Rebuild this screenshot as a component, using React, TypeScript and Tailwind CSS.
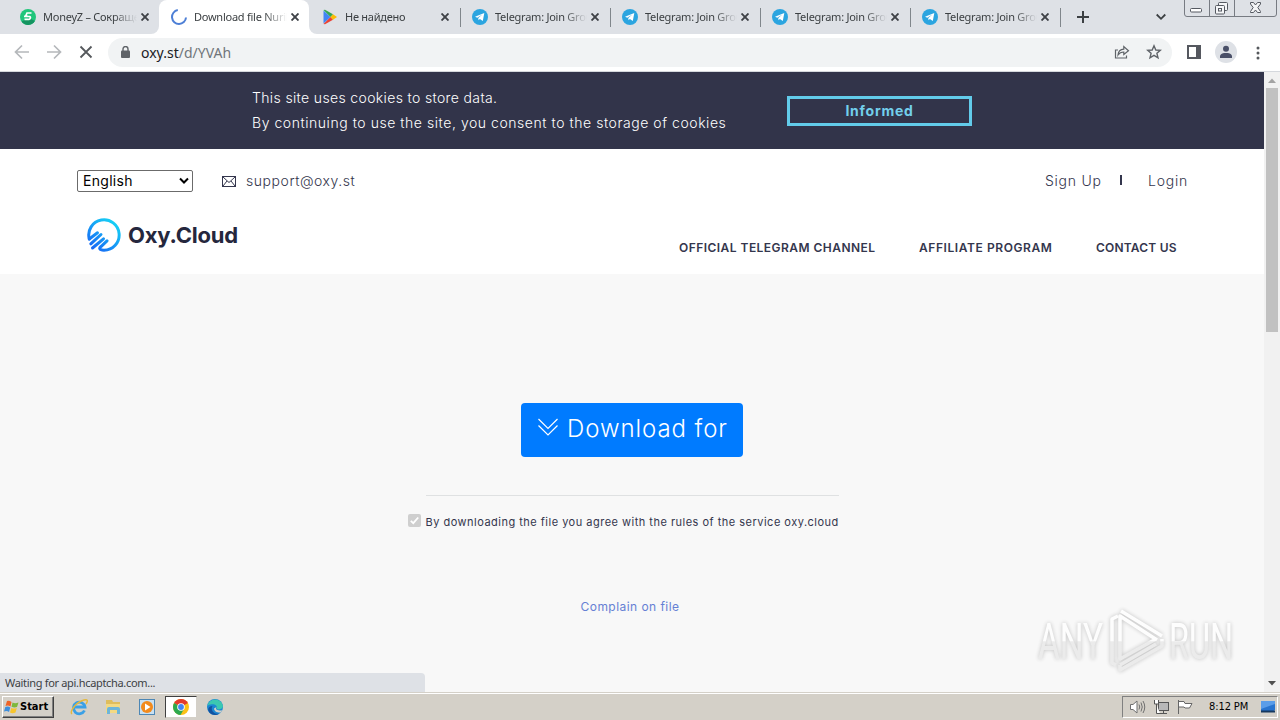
import React from 'react';
import clsx from 'clsx';

interface TabProps {
  title: string;
  icon: React.ReactNode;
  active?: boolean;
  separator?: boolean;
}

const CloseIcon = () => (
  <svg className="w-2 h-2 shrink-0" viewBox="0 0 8 8" fill="none" stroke="#3f4247" strokeWidth="1.9">
    <path d="M0.5 0.5 7.5 7.5M7.5 0.5 0.5 7.5" />
  </svg>
);

const TelegramIcon = () => (
  <svg className="w-4 h-4" viewBox="0 0 16 16">
    <circle cx="8" cy="8" r="8" fill="#2ca5e0" />
    <path d="M3 7.8 12.3 4.1 10.8 12 7.9 9.9 6.5 11.2 6.3 8.9 10.3 5.6 5.3 8.7Z" fill="#fff" />
  </svg>
);

const MoneyIcon = () => (
  <svg className="w-4 h-4" viewBox="0 0 16 16">
    <circle cx="8" cy="8" r="8" fill="#20c67b" />
    <path d="M1.5 12.5A8 8 0 0 0 15 12L9 9Z" fill="#159461" />
    <path d="M11.5 4H7L5.5 7.5H9.5C11 7.8 10.5 10 9 10.3H4.5M4 7.4H8" fill="none" stroke="#fff" strokeWidth="1.7" />
  </svg>
);

const PlayIcon = () => (
  <svg className="w-4 h-4" viewBox="0 0 16 16">
    <path d="M1.500 1.500V14.500L8.500 8Z" fill="#4285f4" />
    <path d="M1.500 1 3 .8 11 5.3 8.500 8Z" fill="#34a853" />
    <path d="M1.500 15 3 15.200 11 10.700 8.500 8Z" fill="#ea4335" />
    <path d="M11 5.300 15 8 11 10.700 8.500 8Z" fill="#fbbc04" />
  </svg>
);

const SpinnerIcon = () => (
  <svg className="w-4 h-4" viewBox="0 0 16 16" fill="none" stroke="#4d7fd6" strokeWidth="2">
    <path d="M6.800 1.100A7 7 0 1 0 15 8.500" />
  </svg>
);

const Tab: React.FC<TabProps> = ({ title, icon, active, separator }) => (
  <div
    className={clsx(
      'relative flex items-center w-[150px] h-[34px] pr-2.5',
      active ? 'bg-white rounded-t-lg pl-3' : 'pl-[11px]'
    )}
  >
    {active && (
      <>
        <span className="absolute bottom-0 -left-2 w-2 h-2 bg-white">
          <span className="block w-2 h-2 rounded-br-lg bg-[#dee1e6]" />
        </span>
        <span className="absolute bottom-0 -right-2 w-2 h-2 bg-white">
          <span className="block w-2 h-2 rounded-bl-lg bg-[#dee1e6]" />
        </span>
      </>
    )}
    {icon}
    <span className="ml-[7px] flex-1 min-w-0 overflow-hidden whitespace-nowrap text-[11px] tracking-[-0.25px] text-[#3c4043] [mask-image:linear-gradient(to_right,black_75%,transparent_100%)]">
      {title}
    </span>
    <span className="ml-1">
      <CloseIcon />
    </span>
    {separator && <span className="absolute right-[-2px] top-2 w-px h-[19px] bg-[#80868b]" />}
  </div>
);

const WindowControls = () => (
  <svg className="absolute right-[3px] top-0 w-[93px] h-[17px]" viewBox="0 0 93 17" fill="none" stroke="#777b82">
    <path d="M.5 0V14Q.5 16.5 3 16.5H90Q92.5 16.5 92.5 14V0M25.5 0V16M50.5 0V16" />
    <rect x="6.500" y="8.500" width="11" height="3.500" rx="1" fill="#fff" stroke="#555961" />
    <g stroke="#555961" fill="#f4f5f7">
      <rect x="34.500" y="2.500" width="9" height="8" rx="1" />
      <rect x="31.500" y="5.500" width="9" height="8.500" rx="1" />
      <rect x="34.500" y="8.500" width="3" height="2.500" />
      <path d="M66.500 2.500H69.500L71.500 5 73.500 2.500H76.500V4L73.800 7.500 76.500 11.500V12.500H73.500L71.500 10 69.500 12.500H66.500V11.500L69.200 7.500 66.500 4Z" />
    </g>
  </svg>
);

const TabStrip = () => (
  <div className="relative flex h-[34px] bg-[#dee1e6] pl-[9px]">
    <Tab title="MoneyZ – Сокращение ссылок" icon={<MoneyIcon />} />
    <Tab title="Download file Nurik.rar" icon={<SpinnerIcon />} active />
    <Tab title="Не найдено" icon={<span className="pl-0.5"><PlayIcon /></span>} separator />
    {[1, 2, 3, 4].map((n) => (
      <Tab key={n} title="Telegram: Join Group Chat" icon={<span className="pl-0.5"><TelegramIcon /></span>} separator />
    ))}
    <svg className="w-3 h-3 mt-[11px] ml-[18px]" viewBox="0 0 12 12" stroke="#3c4043" strokeWidth="2">
      <path d="M6 0V12M0 6H12" />
    </svg>
    <svg className="w-2.5 h-2 mt-[13px] ml-[67px]" viewBox="0 0 10 8" fill="none" stroke="#3c4043" strokeWidth="1.8">
      <path d="M.7 1.500 5 5.800 9.300 1.500" />
    </svg>
    <WindowControls />
  </div>
);

const Toolbar = () => (
  <div className="flex items-center h-[38px] bg-white border-b border-[#d5d8dd] pl-3.5">
    <svg className="w-4 h-4 mb-px" viewBox="0 0 16 16" fill="none" stroke="#b5b8bb" strokeWidth="1.7">
      <path d="M15 8H2M8 1.500 1.500 8 8 14.500" />
    </svg>
    <svg className="w-4 h-4 ml-4 mb-px" viewBox="0 0 16 16" fill="none" stroke="#b5b8bb" strokeWidth="1.7">
      <path d="M1 8H14M8 1.500 14.500 8 8 14.500" />
    </svg>
    <svg className="w-4 h-4 ml-4 mb-px" viewBox="0 0 16 16" fill="none" stroke="#55585c" strokeWidth="1.8">
      <path d="M2.500 2.500 13.500 13.500M13.500 2.500 2.500 13.500" />
    </svg>
    <div className="flex items-center ml-3.5 w-[1064px] h-[29px] mb-px rounded-full bg-[#f1f3f4] pl-[13px] pr-2.5">
      <svg className="w-[9px] h-3" viewBox="0 0 9 12">
        <path d="M2 5V3A2.500 2.500 0 0 1 7 3V5" fill="none" stroke="#5f6368" strokeWidth="1.4" />
        <rect y="4.500" width="9" height="7.500" rx="1" fill="#5f6368" />
      </svg>
      <span className="ml-[11px] mt-0.5 flex-1 text-[14px] leading-5 text-[#202124]">
        oxy.st<span className="text-[#70757a]">/d/YVAh</span>
      </span>
      <svg className="w-4 h-4" viewBox="0 0 16 16" fill="none" stroke="#5f6368" strokeWidth="1.2">
        <path d="M4 6H1.500V14H12.500V11.500" />
        <path d="M4 11C4.300 7 6.500 5.300 9.800 5.200V2.500L14.500 6.700 9.800 10.500V8C7.500 8 5.500 8.800 4 11Z" />
      </svg>
      <svg className="w-4 h-4 ml-4" viewBox="0 0 16 16" fill="none" stroke="#5f6368" strokeWidth="1.4">
        <path d="M8 1.800 9.800 6 14.300 6.300 10.900 9.300 12 13.800 8 11.400 4 13.800 5.100 9.300 1.700 6.300 6.200 6Z" />
      </svg>
    </div>
    <svg className="w-3.5 h-3.5 ml-[15px] mb-px" viewBox="0 0 14 14">
      <rect x="1" y="1" width="12" height="12" fill="none" stroke="#55585f" strokeWidth="2" />
      <path d="M9 1H13V13H9Z" fill="#55585f" />
    </svg>
    <svg className="w-[22px] h-[22px] ml-3.5 mb-px" viewBox="0 0 22 22">
      <circle cx="11" cy="11" r="11" fill="#dee1e6" />
      <circle cx="11" cy="7.700" r="3" fill="#4a5068" />
      <path d="M5 17V15C5.500 12.500 8.500 12 11 12S16.500 12.500 17 15V17Z" fill="#4a5068" />
    </svg>
    <svg className="w-1 h-4 ml-[19px]" viewBox="0 0 4 16" fill="#55585c">
      <circle cx="2" cy="3" r="1.500" />
      <circle cx="2" cy="8" r="1.500" />
      <circle cx="2" cy="13" r="1.500" />
    </svg>
  </div>
);

const CookieBar = () => (
  <div className="flex h-[77px] bg-[#32344a] pl-[252px] pt-[13px] text-white">
    <div className="w-[535px] text-[14px] leading-[25px] font-light">
      <p className="tracking-[0.36px]">This site uses cookies to store data.</p>
      <p className="tracking-[0.55px]">By continuing to use the site, you consent to the storage of cookies</p>
    </div>
    <button className="mt-[11px] w-[185px] h-[30px] border-[3px] border-[#62cbea] text-[14px] leading-6 font-bold tracking-[0.75px] text-[#72cfec]">
      Informed
    </button>
  </div>
);

const Logo = () => (
  <div className="flex items-center">
    <svg className="w-[34px] h-[34px]" viewBox="0 0 34 34" fill="none">
      <defs>
        <linearGradient id="oxy" x1="30" y1="4" x2="8" y2="32" gradientUnits="userSpaceOnUse">
          <stop stopColor="#16d5f5" />
          <stop offset="1" stopColor="#1769f5" />
        </linearGradient>
      </defs>
      <g stroke="url(#oxy)" strokeWidth="3" strokeLinecap="round">
        <path d="M2.300 21A15.200 15.200 0 1 1 17 32.200C12 32 12 30 14 28.500L20 22.800" />
        <path d="M2.300 21 10.500 14.800M3.800 25.800 14 16.500M5.500 30 16.500 20.800" />
      </g>
    </svg>
    <span className="ml-[7px] text-[22px] leading-[34px] font-bold tracking-[-0.2px] text-[#25273d]">Oxy.Cloud</span>
  </div>
);

const Header = () => (
  <header className="h-[125px] bg-white text-[#34364d]">
    <div className="flex items-center h-[43px] pt-[21px] pl-[77px] text-[14px] font-light">
      <div className="flex items-center justify-between w-[116px] h-[22px] shrink-0 border border-[#6b6b6b] rounded-[2px] pl-[5px] pr-[3px] font-normal text-[14px] tracking-[0.3px] text-black">
        <span className="mb-0.5">English</span>
        <svg className="w-2.5 h-2" viewBox="0 0 10 8" fill="none" stroke="#000" strokeWidth="2">
          <path d="M1 1.500 5 5.500 9 1.500" />
        </svg>
      </div>
      <svg className="w-3.5 h-[11px] ml-[29px]" viewBox="0 0 14 11" fill="none" stroke="#34364d">
        <rect x=".5" y=".5" width="13" height="10" />
        <path d="M1 1 7 6.500 13 1M1 10 5 5M13 10 9 5" />
      </svg>
      <span className="ml-2.5 mb-0.5 tracking-[0.55px]">support@oxy.st</span>
      <span className="ml-auto mb-0.5 w-[75px] tracking-[0.75px]">Sign Up</span>
      <span className="mb-0.5 w-0.5 h-2.5 bg-[#34364d]" />
      <span className="ml-[26px] mb-0.5 w-[116px] tracking-[0.75px]">Login</span>
    </div>
    <div className="flex justify-between pl-[87px] mt-[26px]">
      <div className="h-[34px]">
        <Logo />
      </div>
      <nav className="flex pt-5 text-[12px] leading-5 font-semibold whitespace-nowrap">
        <span className="w-60 tracking-[0.46px]">OFFICIAL TELEGRAM CHANNEL</span>
        <span className="w-[177px] tracking-[0.58px]">AFFILIATE PROGRAM</span>
        <span className="w-[168px] tracking-[0.2px]">CONTACT US</span>
      </nav>
    </div>
  </header>
);

const DownloadSection = () => (
  <main className="flex flex-col items-center h-[418px] bg-[#f8f8f8] pt-[129px]">
    <button className="flex items-center w-[222px] h-[54px] rounded bg-[#007bff] pl-[17px] text-white">
      <svg className="w-5 h-[18px] mb-1.5" viewBox="0 0 20 18" fill="none" stroke="#fff" strokeWidth="1.2">
        <path d="M.5 1 10 10.500 19.500 1M.5 7.500 10 17 19.500 7.500" />
      </svg>
      <span className="ml-[9px] mb-0.5 text-[24px] font-light tracking-[0.93px] whitespace-nowrap">Download for</span>
    </button>
    <div className="mt-[38px] w-[413px] h-px bg-[#dfe1e2]" />
    <label className="flex mt-[17px] w-[449px]">
      <svg className="w-[13px] h-[13px] mt-px" viewBox="0 0 13 13">
        <rect width="13" height="13" rx="2" fill="#cfcfcf" />
        <path d="M2.800 6.800 5.300 9.200 10.200 3.500" fill="none" stroke="#fff" strokeWidth="1.8" />
      </svg>
      <span className="ml-[5px] text-[11px] leading-[18px] tracking-[0.49px] text-[#34364d] whitespace-nowrap">
        By downloading the file you agree with the rules of the service oxy.cloud
      </span>
    </label>
    <a className="mt-[67px] -ml-1 text-[12px] leading-[18px] tracking-[0.45px] text-[#6680d4]">Complain on file</a>
  </main>
);

const Scrollbar = () => (
  <div className="flex flex-col items-center w-4 h-[620px] bg-[#f1f1f1]">
    <svg className="w-2 h-4" viewBox="0 0 8 16" fill="#a3a3a3">
      <path d="M0 11 4 6.500 8 11Z" />
    </svg>
    <div className="w-3 h-[244px] bg-[#c1c1c1]" />
    <svg className="w-2 h-4 mt-auto" viewBox="0 0 8 16" fill="#505050">
      <path d="M0 5 4 9.500 8 5Z" />
    </svg>
  </div>
);

const Watermark = () => (
  <svg className="absolute left-[1034px] top-[606px] w-[204px] h-[70px] opacity-80 drop-shadow-[0_0_2px_rgba(0,0,0,0.28)]" viewBox="0 0 204 70">
    <defs>
      <linearGradient id="wm" x1="0" y1="0" x2="0" y2="70" gradientUnits="userSpaceOnUse">
        <stop offset=".5" stopColor="#fff" />
        <stop offset=".51" stopColor="#e8e8e8" />
      </linearGradient>
    </defs>
    <g fill="url(#wm)" fontFamily="Roboto, sans-serif" fontSize="50" fontWeight="400">
      <text x="4" y="53" textLength="65" lengthAdjust="spacingAndGlyphs">ANY</text>
      <text x="135" y="53" textLength="64" lengthAdjust="spacingAndGlyphs">RUN</text>
    </g>
    <g fill="none" stroke="url(#wm)" strokeWidth="3.500" strokeLinejoin="round">
      <path d="M84 10 78 13V57L82 59" />
      <path d="M123 34 86 10V53L122 33M86 59V64L128 40V33" />
      <path d="M87 5 128 30M86 59 122 38" />
    </g>
  </svg>
);

const InternetExplorerIcon = () => (
  <svg className="w-[18px] h-[18px]" viewBox="0 0 18 18" fill="none">
    <path d="M14.500 12.500A5.800 5.800 0 1 1 15 9H5" stroke="#3aa0e6" strokeWidth="2.8" />
    <path d="M2 16C-1 14 6 4 14 2 18 1 18 3 16 6" stroke="#e5b83c" strokeWidth="1.4" />
  </svg>
);

const ExplorerIcon = () => (
  <svg className="w-[18px] h-[18px]" viewBox="0 0 18 18">
    <path d="M2 2H8L9 4H16V14H2Z" fill="#dfbd5c" />
    <path d="M2 6H16V15H2Z" fill="#f3d983" />
    <path d="M3 16V11Q3 9 5 9H14Q16 9 16 11V16H13V12H6V16Z" fill="#6db5d9" />
  </svg>
);

const MediaPlayerIcon = () => (
  <svg className="w-[18px] h-[18px]" viewBox="0 0 18 18">
    <rect x="1.500" y="1.500" width="15" height="15" fill="#c8e0f2" stroke="#4d87b5" />
    <circle cx="9" cy="9" r="6" fill="#f28a1c" />
    <path d="M7 5.500 12.500 9 7 12.500Z" fill="#fff" />
  </svg>
);

const ChromeIcon = () => (
  <svg className="w-4 h-4" viewBox="0 0 16 16">
    <circle cx="8" cy="8" r="8" fill="#fbc116" />
    <path d="M8 8 1.100 4A8 8 0 0 1 14.900 4Z" fill="#e33b2e" />
    <path d="M8 8 1.100 4A8 8 0 0 0 7.500 16L11 10Z" fill="#2da94f" />
    <circle cx="8" cy="8" r="3.800" fill="#fff" />
    <circle cx="8" cy="8" r="2.900" fill="#4285f4" />
  </svg>
);

const EdgeIcon = () => (
  <svg className="w-4 h-4" viewBox="0 0 16 16">
    <circle cx="8" cy="8" r="8" fill="#1b86d2" />
    <path d="M.3 7A8 8 0 0 1 16 7C16 10 12 11 9.500 10 11 7 8 5 5 5.200 2.500 5.400 1 6 .3 7Z" fill="#3bc8b1" />
    <path d="M5.500 7C3 11 7 15.500 12 14.800 9 17 4 16 2 13 0 10 2 7 5.500 7Z" fill="#1252a0" />
    <path d="M9.500 8C8 10 9.500 12 15 11.200L14 13.500C10 14 7 12 7 9.500Z" fill="#d4d0c8" />
  </svg>
);

const StartButton = () => (
  <button className="flex items-center w-[52px] h-[22px] ml-0.5 pl-px border border-t-white border-l-white border-r-[#404040] border-b-[#404040] bg-[#d4d0c8] shadow-[inset_-1px_-1px_0_#808080]">
    <svg className="w-4 h-4 shrink-0" viewBox="0 0 16 16">
      <path d="M3 2Q5 1 7.500 3L6.500 7.500Q4 6 1.500 7Z" fill="#ee6326" />
      <path d="M8.500 3.500Q11 5 14.500 3.500L13 8Q10.500 9 7.500 7.800Z" fill="#7eb83c" />
      <path d="M1.300 8Q4 7 6.300 8.500L5 13Q3 11.500 0 12.500Z" fill="#3d8edc" />
      <path d="M7.300 9Q10 10 12.800 9L11.500 13.500Q8.500 14.800 6 13.500Z" fill="#f7c52d" />
    </svg>
    <span className="text-[11px] font-bold leading-4 text-black">Start</span>
  </button>
);

const Tray = () => (
  <div className="flex items-center ml-auto mr-0.5 w-[156px] h-[22px] pl-1.5 border border-t-[#808080] border-l-[#808080] border-r-white border-b-white">
    <svg className="w-[17px] h-4" viewBox="0 0 17 16" fill="#fff" stroke="#707070">
      <path d="M1.500 5.500H4L8 2V14L4 10.500H1.500Z" />
      <path d="M10 5.500Q11.500 8 10 10.500M12 3.500Q14.500 8 12 12.500M14 2Q17.500 8 14 14" fill="none" />
    </svg>
    <svg className="w-4 h-4 ml-[7px]" viewBox="0 0 16 16" fill="#fff" stroke="#555">
      <rect x="5.500" y="3.500" width="10" height="8" fill="#b8b8b8" />
      <path d="M7 14.500H14M10.500 12V14M1.500 1V5H5.500V1M3.500 5V14.500H7" />
    </svg>
    <svg className="w-4 h-4 ml-2" viewBox="0 0 16 16" fill="#fff" stroke="#666">
      <path d="M1.500 1V15M2 2.500H7L8 4.500H15L12.500 9H8L7 8H2" />
    </svg>
    <span className="ml-4 w-[51px] text-[11px] leading-4 tracking-[-0.1px] whitespace-nowrap text-black">8:12 PM</span>
    <svg className="w-4 h-4 shrink-0" viewBox="0 0 16 16">
      <path d="M1 2H15V11L12 13H1Z" fill="#2874cf" />
      <path d="M1 2H15V5L1 10Z" fill="#5a9de9" />
      <path d="M1 11.500H15V13.500H1Z" fill="#17395f" />
    </svg>
  </div>
);

const Taskbar = () => (
  <footer className="flex items-center h-7 bg-[#d4d0c8] shadow-[inset_0_1px_0_#d4d0c8,inset_0_2px_0_#fff] pt-0.5 font-['DejaVu_Sans_Condensed','DejaVu_Sans',sans-serif]">
    <StartButton />
    <div className="flex items-center ml-4">
      <InternetExplorerIcon />
      <span className="ml-4"><ExplorerIcon /></span>
      <span className="ml-4"><MediaPlayerIcon /></span>
      <span className="flex items-center justify-center w-8 h-[22px] ml-[9px] bg-white border border-t-[#404040] border-l-[#404040] border-r-[#d4d0c8] border-b-[#d4d0c8]">
        <ChromeIcon />
      </span>
      <span className="ml-2.5"><EdgeIcon /></span>
    </div>
    <Tray />
  </footer>
);

export default function App() {
  return (
    <div className="relative w-[1280px] h-[720px] overflow-hidden bg-white font-['Noto_Sans',sans-serif]">
      <TabStrip />
      <Toolbar />
      <div className="flex h-[620px]">
        <div className="w-[1264px] font-['Inter',sans-serif]">
          <CookieBar />
          <Header />
          <DownloadSection />
        </div>
        <Scrollbar />
      </div>
      <Taskbar />

      {/* Overlays */}
      <div className="absolute left-0 top-[673px] w-[425px] h-[19px] rounded-tr bg-[#dee1e6] pl-[5px] text-[11px] leading-5 tracking-[-0.32px] text-[#3c4043]">
        Waiting for api.hcaptcha.com...
      </div>
      <Watermark />
    </div>
  );
}
